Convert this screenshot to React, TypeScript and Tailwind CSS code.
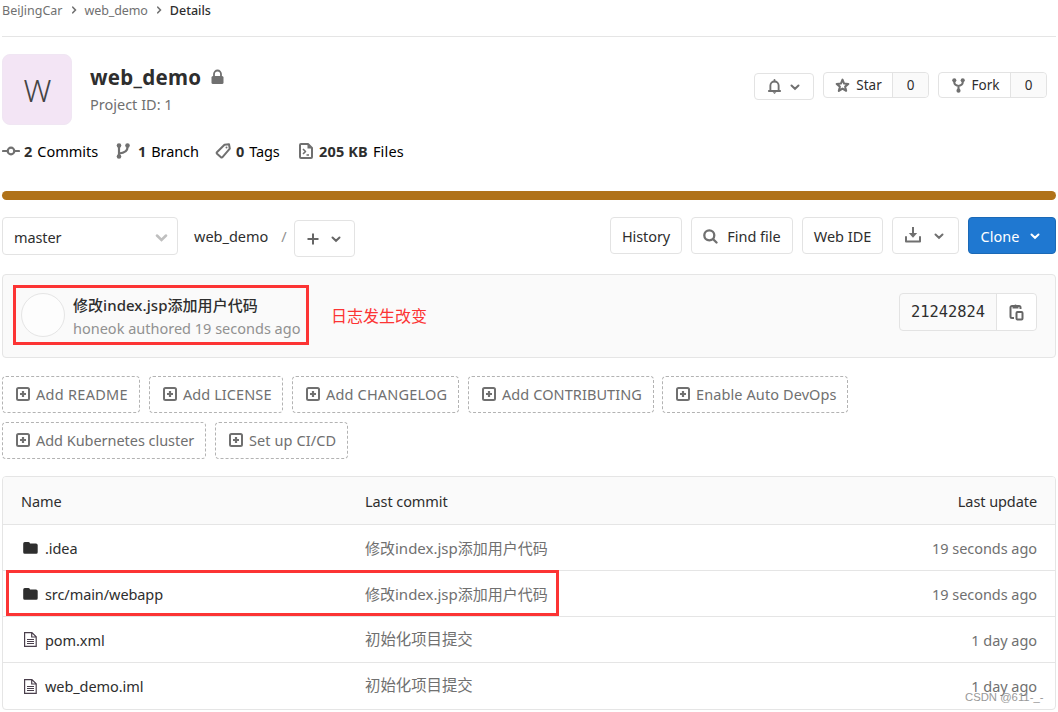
import type { ReactNode } from 'react';

interface FileRow {
  name: string;
  type: 'folder' | 'file';
  commit: string;
  commitSize: string;
  updated: string;
}

const files: FileRow[] = [
  { name: '.idea', type: 'folder', commit: '修改index.jsp添加用户代码', commitSize: 'text-[15px]', updated: '19 seconds ago' },
  { name: 'src/main/webapp', type: 'folder', commit: '修改index.jsp添加用户代码', commitSize: 'text-[15px]', updated: '19 seconds ago' },
  { name: 'pom.xml', type: 'file', commit: '初始化项目提交', commitSize: 'text-[15.4px]', updated: '1 day ago' },
  { name: 'web_demo.iml', type: 'file', commit: '初始化项目提交', commitSize: 'text-[15.4px]', updated: '1 day ago' },
];

const suggestions = [
  { label: 'Add README', width: 'w-[138px]', tracking: 'tracking-[0.28px]' },
  { label: 'Add LICENSE', width: 'w-[134px]', tracking: 'tracking-[0.08px]' },
  { label: 'Add CHANGELOG', width: 'w-[167px]', tracking: 'tracking-[0.18px]' },
  { label: 'Add CONTRIBUTING', width: 'w-[186px]', tracking: 'tracking-[0.08px]' },
  { label: 'Enable Auto DevOps', width: 'w-[186px] -ml-px', tracking: 'tracking-[0.1px]' },
  { label: 'Add Kubernetes cluster', width: 'w-[204px]', tracking: 'tracking-[-0.04px]' },
  { label: 'Set up CI/CD', width: 'w-[133px]', tracking: 'tracking-[0.1px]' },
];

export default function App() {
  return (
    <div className="relative h-[712px] w-[1058px] overflow-hidden bg-white px-[2px] font-['Noto_Sans','Noto_Sans_CJK_SC',sans-serif] text-[14.5px] leading-5 text-[#2e2e2e]">
      {/* Breadcrumbs */}
      <nav className="flex h-[37px] items-start border-b border-[#e5e5e5] pt-px text-[12.5px] text-[#707070]">
        <span>BeiJingCar</span>
        <Chevron className="mx-[7px] mt-[5px] size-2 -rotate-90" />
        <span className="tracking-[-0.1px]">web_demo</span>
        <Chevron className="mx-[7px] mt-[5px] size-2 -rotate-90" />
        <span className="font-medium text-[#2e2e2e]">Details</span>
      </nav>

      {/* Project header */}
      <header className="flex h-[87px] pt-[17px]">
        <div className="flex h-[71px] w-[70px] items-center justify-center rounded-lg border border-[#f0e6f3] bg-[#f3e5f5] pl-px text-[31px] font-light text-[#444]">
          W
        </div>
        <div className="ml-[18px] pt-[10px]">
          <div className="flex items-center">
            <h1 className="text-[20.5px] leading-[26px] font-bold tracking-[0.28px]">web_demo</h1>
            <LockIcon />
          </div>
          <p className="mt-[4px] text-[#707070]">Project ID: 1</p>
        </div>
        <div className="ml-auto flex items-start pt-[18px] pr-[9px] text-[13.5px]">
          <button className="mt-px mr-[9px] flex h-[27px] w-[60px] items-center justify-center gap-[8px] rounded border border-[#e3e3e3] pr-[2px] text-[#707070]">
            <BellIcon />
            <Chevron className="size-[10px]" />
          </button>
          <CountButton icon={<StarIcon />} label="Star" className="mr-[9px] w-[106px]" />
          <CountButton icon={<ForkIcon />} label="Fork" className="w-[109px]" />
        </div>
      </header>

      {/* Stats */}
      <div className="flex h-[67px] items-start pt-[17px] text-black">
        <Stat icon={<CommitIcon />} value="2" label="Commits" className="w-[113px]" />
        <Stat icon={<BranchIcon />} value="1" label="Branch" className="w-[100px] tracking-[-0.1px]" />
        <Stat icon={<TagIcon />} value="0" label="Tags" className="w-[83px] tracking-[-0.1px]" />
        <Stat icon={<DiskIcon />} value="205 KB" label="Files" className="tracking-[0.16px]" />
      </div>
      <div className="h-[9px] rounded-full bg-[#b07219]" />

      {/* Tree controls */}
      <div className="flex h-[74px] items-start pt-[17px]">
        <button className="flex h-[38px] w-[176px] items-center justify-between rounded border border-[#e3e3e3] pt-[2px] pr-[9px] pl-[11px] tracking-[-0.1px]">
          master
          <Chevron className="size-[13px] text-[#bfbfbf]" />
        </button>
        <span className="mt-[9px] ml-[16px]">web_demo</span>
        <span className="mt-[9px] ml-[13px] text-[#919191]">/</span>
        <button className="mt-[3px] ml-[7px] flex h-[37px] w-[61px] items-center justify-center gap-[12px] rounded border border-[#e3e3e3] text-[#666]">
          <svg className="size-3" viewBox="0 0 12 12" stroke="currentColor" strokeWidth="2">
            <path d="M6 .5v11M.5 6h11" />
          </svg>
          <Chevron className="size-[10px]" />
        </button>
        <div className="ml-auto flex gap-[9px]">
          <ToolButton className="w-[72px] tracking-[-0.1px]">History</ToolButton>
          <ToolButton className="w-[102px] gap-[9px]">
            <SearchIcon />
            Find file
          </ToolButton>
          <ToolButton className="w-[81px]">Web IDE</ToolButton>
          <ToolButton className="w-[67px] gap-[13px] pr-[3px] text-[#707070]">
            <DownloadIcon />
            <Chevron className="size-[10px]" />
          </ToolButton>
          <button className="flex h-[37px] w-[88px] items-center justify-center gap-[11px] rounded border border-[#1b69b6] bg-[#1f78d1] pr-[3px] text-white">
            Clone
            <Chevron className="size-[10px]" />
          </button>
        </div>
      </div>

      {/* Last commit */}
      <div className="flex h-[84px] items-start rounded border border-[#e5e5e5] bg-[#fafafa] pt-[18px] pr-[18px] pl-[18px]">
        <div className="size-[44px] rounded-full border border-[#e5e5e5] bg-[#fdfdfd]" />
        <div className="ml-[8px] pt-[2px]">
          <p className="text-[15px] leading-[20px] font-medium tracking-[0.05px]">修改index.jsp添加用户代码</p>
          <p className="mt-[3px] text-[#919191]">honeok authored 19 seconds ago</p>
        </div>
        <div className="ml-auto flex h-[38px] w-[138px] rounded border border-[#e3e3e3]">
          <span className="flex w-[97px] items-center justify-center border-r border-[#e3e3e3] font-['DejaVu_Sans_Mono',monospace] text-[15.4px]">
            21242824
          </span>
          <button className="flex flex-1 items-center justify-center rounded-r bg-white">
            <CopyIcon />
          </button>
        </div>
      </div>

      {/* Suggested files */}
      <div className="mt-[18px] flex w-[900px] flex-wrap gap-[9px]">
        {suggestions.map((s) => (
          <button
            key={s.label}
            className={`flex h-[37px] items-center rounded border border-dashed border-[#b3b3b3] pb-[2px] pl-[13px] whitespace-nowrap text-[#707070] ${s.width}`}
          >
            <PlusSquareIcon />
            <span className={`ml-[6px] ${s.tracking}`}>{s.label}</span>
          </button>
        ))}
      </div>

      {/* File list */}
      <div className="mt-[17px] overflow-hidden rounded border border-[#e5e5e5]">
        <div className="flex h-[48px] items-center border-b border-[#e5e5e5] bg-[#fafafa] px-[18px] tracking-[-0.08px]">
          <span className="w-[344px]">Name</span>
          <span>Last commit</span>
          <span className="ml-auto">Last update</span>
        </div>
        {files.map((f) => (
          <div key={f.name} className="flex h-[46px] items-center border-b border-[#e5e5e5] pr-[18px] pl-[20px] last:border-b-0">
            {f.type === 'folder' ? <FolderIcon /> : <FileIcon />}
            <span className="ml-[7px] w-[320px] tracking-[-0.08px]">{f.name}</span>
            <span className={`text-[#707070] ${f.commitSize}`}>{f.commit}</span>
            <span className="ml-auto tracking-[-0.05px] text-[#707070]">{f.updated}</span>
          </div>
        ))}
      </div>

      {/* Annotations */}
      <div className="absolute top-[285px] left-[13px] h-[60px] w-[296px] border-3 border-[#fc3434]" />
      <div className="absolute top-[306px] left-[331px] text-[16px] leading-5 text-[#fc3434]">日志发生改变</div>
      <div className="absolute top-[570px] left-[6px] h-[46px] w-[553px] border-3 border-[#fc3434]" />
      <div className="absolute top-[690px] left-[965px] font-['Liberation_Sans',sans-serif] text-[11.3px] leading-[14px] text-[#999]">
        CSDN @611-_-
      </div>
    </div>
  );
}

function ToolButton({ className, children }: { className: string; children: ReactNode }) {
  return (
    <button className={`flex h-[37px] items-center justify-center rounded border border-[#e3e3e3] whitespace-nowrap ${className}`}>
      {children}
    </button>
  );
}

function CountButton({ icon, label, className }: { icon: ReactNode; label: string; className: string }) {
  return (
    <div className={`flex h-[26px] rounded border border-[#e3e3e3] ${className}`}>
      <button className="flex flex-1 items-center justify-center gap-[6px] pl-px">
        {icon}
        {label}
      </button>
      <span className="flex w-[36px] items-center justify-center rounded-r border-l border-[#e3e3e3] bg-[#fafafa]">0</span>
    </div>
  );
}

function Stat({ icon, value, label, className }: { icon: ReactNode; value: string; label: string; className: string }) {
  return (
    <div className={`flex items-center whitespace-nowrap ${className}`}>
      {icon}
      <b className="mr-[5px] ml-[4px] font-bold text-[#2e2e2e]">{value}</b>
      {label}
    </div>
  );
}

function Chevron({ className }: { className: string }) {
  return (
    <svg className={`shrink-0 ${className}`} viewBox="0 0 10 10" fill="none" stroke="currentColor" strokeWidth="2" strokeLinecap="round">
      <path d="M1.5 3.5 5 6.800l3.500-3.300" />
    </svg>
  );
}

function LockIcon() {
  return (
    <svg className="ml-[10px] h-[16px] w-[13px] text-[#707070]" viewBox="0 0 13 16">
      <path d="M3 8V5a3.5 3.5 0 0 1 7 0v3" fill="none" stroke="currentColor" strokeWidth="1.8" />
      <rect x=".5" y="7" width="12" height="8" rx="1.5" fill="currentColor" />
    </svg>
  );
}

function BellIcon() {
  return (
    <svg className="size-[15px]" viewBox="0 0 16 16" fill="none" stroke="currentColor" strokeWidth="2">
      <path d="M3.600 12.500V7a4.400 4.400 0 0 1 8.800 0v5.500M2 12.800h12" strokeLinecap="round" />
      <path d="M8 1v1.500" strokeLinecap="round" />
      <path d="M6 14h4l-2 2z" fill="currentColor" stroke="none" />
    </svg>
  );
}

function StarIcon() {
  return (
    <svg className="size-[15px] text-[#707070]" viewBox="0 0 16 16" fill="none" stroke="currentColor" strokeWidth="2.200" strokeLinejoin="round">
      <path d="m8 1.800 1.700 4.100 4.500.4-3.400 2.900 1.100 4.500L8 11.300l-3.900 2.400 1.100-4.500L1.800 6.300l4.500-.4z" />
    </svg>
  );
}

function ForkIcon() {
  return (
    <svg className="size-[15px] text-[#707070]" viewBox="0 0 16 16" fill="none" stroke="currentColor" strokeWidth="2.200">
      <path d="M3.500 3v1.500c0 2 2 3.500 4.500 4 2.500-.5 4.500-2 4.500-4V3M8 8.500V13" />
      <g fill="currentColor" stroke="none">
        <circle cx="3.500" cy="2.500" r="2.200" />
        <circle cx="12.500" cy="2.500" r="2.200" />
        <circle cx="8" cy="13.500" r="2.200" />
      </g>
    </svg>
  );
}

function CommitIcon() {
  return (
    <svg className="h-[16px] w-[18px] text-[#707070]" viewBox="0 0 18 16" fill="none" stroke="currentColor" strokeWidth="2.200">
      <circle cx="9" cy="8" r="3.300" />
      <path d="M1 8h4M13 8h4" strokeLinecap="round" />
    </svg>
  );
}

function BranchIcon() {
  return (
    <svg className="mr-[3px] size-[16px] text-[#707070]" viewBox="0 0 16 16" fill="none" stroke="currentColor" strokeWidth="2.200">
      <path d="M4 3v10M4 10.500c5-.5 8.500-2 8.500-6V3" />
      <g fill="currentColor" stroke="none">
        <circle cx="4" cy="2.500" r="2.300" />
        <circle cx="12.500" cy="2.500" r="2.300" />
        <circle cx="4" cy="13.500" r="2.300" />
      </g>
    </svg>
  );
}

function TagIcon() {
  return (
    <svg className="mr-px size-[16px] text-[#707070]" viewBox="0 0 16 16" fill="none" stroke="currentColor" strokeWidth="2" strokeLinejoin="round">
      <path d="m9.500 1.700 4.500-.5.800 4.500-7.300 8.500a1 1 0 0 1-1.500.100l-4-3.600a1 1 0 0 1-.1-1.500z" />
      <circle cx="11.500" cy="4.600" r="1" fill="currentColor" stroke="none" />
    </svg>
  );
}

function DiskIcon() {
  return (
    <svg className="mr-px size-[16px] text-[#707070]" viewBox="0 0 16 16" fill="none" stroke="currentColor" strokeWidth="2" strokeLinejoin="round">
      <path d="M3 1h7l4 4v9a1 1 0 0 1-1 1H3a1 1 0 0 1-1-1V2a1 1 0 0 1 1-1z" />
      <path d="M9.500 1v4.500H14z" fill="currentColor" stroke="none" />
      <path d="m5 6 2.500 2.500L5 11M8.500 12H11" strokeWidth="1.600" />
    </svg>
  );
}

function SearchIcon() {
  return (
    <svg className="size-[15px] translate-y-px text-[#707070]" viewBox="0 0 15 15" fill="none" stroke="currentColor" strokeWidth="2.300">
      <circle cx="6.300" cy="6.300" r="5" />
      <path d="m10.200 10.200 3.300 3.300" strokeLinecap="round" />
    </svg>
  );
}

function DownloadIcon() {
  return (
    <svg className="size-[16px] -translate-y-px" viewBox="0 0 16 16" fill="none" stroke="currentColor" strokeWidth="2">
      <path d="M1 10v4.500h14V10" strokeLinejoin="round" strokeLinecap="round" />
      <path d="M8 0v7" />
      <path d="M3.800 6h8.400L8 10.800z" fill="currentColor" stroke="none" />
    </svg>
  );
}

function CopyIcon() {
  return (
    <svg className="h-[18px] w-[15px] text-[#666]" viewBox="0 0 15 18" fill="none" stroke="currentColor" strokeWidth="2">
      <path d="M5 15H3a1.500 1.500 0 0 1-1.500-1.500v-9A1.500 1.500 0 0 1 3 3h7a1.500 1.500 0 0 1 1.500 1.500V6" />
      <path d="M3.500 5.500v-3h1.700a1.400 1.400 0 0 1 2.600 0h1.700v3z" fill="currentColor" stroke="none" />
      <rect x="7.500" y="9" width="6" height="7.500" rx="1" />
    </svg>
  );
}

function PlusSquareIcon() {
  return (
    <svg className="size-[14px] shrink-0" viewBox="0 0 14 14" fill="none" stroke="currentColor" strokeWidth="2">
      <rect x="1" y="1" width="12" height="12" rx="1.500" />
      <path d="M7 4v6M4 7h6" strokeWidth="2.200" />
    </svg>
  );
}

function FolderIcon() {
  return (
    <svg className="h-[14px] w-[15px] shrink-0" viewBox="0 0 15 14" fill="#2e2e2e">
      <path d="M2 1h3.500A1.500 1.500 0 0 1 7 2.500h6A1.700 1.700 0 0 1 14.700 4v7.200a1.500 1.500 0 0 1-1.500 1.500H1.700A1.500 1.500 0 0 1 .2 11.200V2.700A1.700 1.700 0 0 1 2 1z" />
    </svg>
  );
}

function FileIcon() {
  return (
    <svg className="h-[15px] w-[15px] shrink-0" viewBox="0 0 15 15" fill="none" stroke="#4a3f4c" strokeWidth="1.200">
      <path d="M1.600.6h7.300l4.300 4.200v9.600H1.600zM8.700.6V5h4.500" />
      <path d="M4 7.500h7M4 9.500h7M4 11.500h7" strokeWidth="1" />
    </svg>
  );
}
